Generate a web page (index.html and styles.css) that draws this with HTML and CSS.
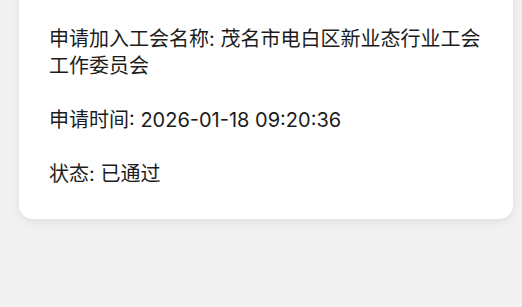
FILE: index.html
```html
<!DOCTYPE html>
<html lang="zh-CN">
<head>
<meta charset="utf-8">
<link rel="stylesheet" href="styles.css">
</head>
<body>
<div class="page">
  <div class="card">
    <p class="row">申请加入工会名称: 茂名市电白区新业态行业工会工作委员会</p>
    <p class="row">申请时间: 2026-01-18 09:20:36</p>
    <p class="row">状态: 已通过</p>
  </div>
</div>
</body>
</html>
```

FILE: styles.css
```css
html, body {
  margin: 0;
  padding: 0;
  background: #f0f1f0;
  height: 100%;
  overflow: hidden;
}
.page {
  padding: 0 9px 0 19px;
  font-family: Inter, "Noto Sans CJK SC", sans-serif;
}
.card {
  margin-top: -20px;
  background: #ffffff;
  border-radius: 14px;
  box-shadow: 0 3px 8px rgba(0, 0, 0, 0.08);
  padding: 46px 30px 31px 30px;
}
.row {
  margin: 0 0 27px 0;
  font-size: 20px;
  line-height: 27px;
  color: #1c1c1c;
}
.row:last-child {
  margin-bottom: 0;
}
```
